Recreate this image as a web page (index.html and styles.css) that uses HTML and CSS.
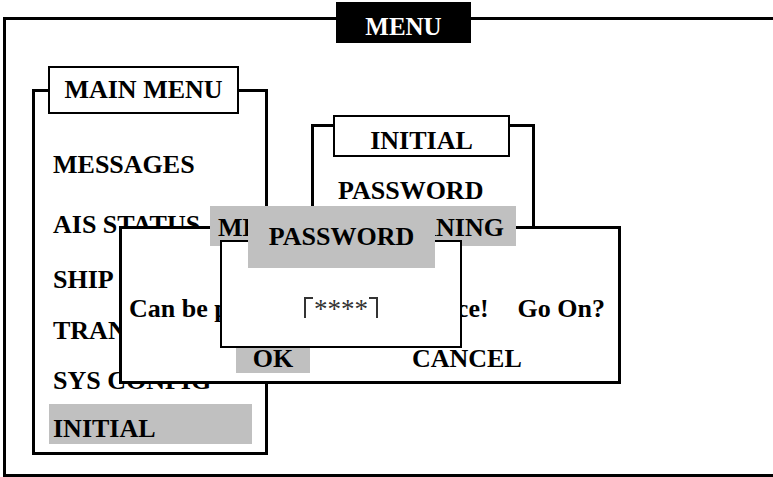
FILE: index.html
```html
<!DOCTYPE html>
<html lang="en">
<head>
  <meta charset="UTF-8">
  <title>Menu</title>
  <link rel="stylesheet" href="styles.css">
</head>
<body>
  <div class="screen">
    <div class="frame"></div>
    <div class="frame-title">MENU</div>

    <div class="window main-menu">
      <div class="window-title">MAIN MENU</div>
      <ul class="menu-items">
        <li>MESSAGES</li>
        <li>AIS STATUS</li>
        <li>SHIP INFO</li>
        <li>TRANSMIT</li>
        <li>SYS CONFIG</li>
        <li class="selected">INITIAL</li>
      </ul>
    </div>

    <div class="window initial">
      <div class="window-title">INITIAL</div>
      <ul class="menu-items">
        <li>PASSWORD</li>
        <li>DEFAULT</li>
      </ul>
    </div>

    <div class="dialog warning">
      <div class="dialog-title title-split"><span>MESSAGE</span><span>WARNING</span></div>
      <div class="message">
        <span>Can be performed</span>
        <span class="message-end"><span>once!</span><span>Go On?</span></span>
      </div>
      <div class="buttons">
        <span class="btn btn-ok">OK</span>
        <span class="btn btn-cancel">CANCEL</span>
      </div>
    </div>

    <div class="dialog password">
      <div class="dialog-title title-center">PASSWORD</div>
      <div class="secret">
        <span class="bracket bracket-left"></span>
        <span class="stars">****</span>
        <span class="bracket bracket-right"></span>
      </div>
    </div>
  </div>
</body>
</html>
```

FILE: styles.css
```css
body {
  margin: 0;
  background-color: #fff;
  color: #000;
  font-family: "Liberation Serif", "Times New Roman", serif;
  font-weight: bold;
}

.screen {
  position: relative;
  width: 773px;
  height: 477px;
  overflow: hidden;
}

.frame {
  box-sizing: border-box;
  width: 800px;
  height: 460px;
  margin: 17px 0 0 3px;
  border: 3px solid #000;
}

.frame-title {
  position: absolute;
  left: 336px;
  top: 2px;
  box-sizing: border-box;
  width: 135px;
  height: 41px;
  padding-top: 10px;
  background-color: #000;
  color: #fff;
  font-size: 25px;
  line-height: 30px;
  text-align: center;
}

/* windows */
.window {
  position: absolute;
  box-sizing: border-box;
  border: 3px solid #000;
  background-color: #fff;
}

.main-menu {
  left: 32px;
  top: 89px;
  width: 236px;
  height: 366px;
}

.initial {
  left: 311px;
  top: 124px;
  width: 224px;
  height: 200px;
}

.window-title {
  position: absolute;
  box-sizing: border-box;
  display: flex;
  align-items: center;
  justify-content: center;
  border: 2px solid #000;
  background-color: #fff;
  font-size: 26px;
  line-height: 30px;
}

.main-menu .window-title {
  left: 13px;
  top: -26px;
  width: 191px;
  height: 48px;
}

.initial .window-title {
  left: 19px;
  top: -12px;
  width: 177px;
  height: 42px;
  align-items: flex-start;
  padding-top: 9px;
}

.menu-items {
  list-style: none;
  margin: 0;
  padding: 0;
  display: grid;
}

.menu-items li {
  font-size: 26px;
  line-height: 30px;
  white-space: nowrap;
}

.main-menu .menu-items {
  margin: 0 13px 0 14px;
  padding-top: 58px;
  grid-template-rows: 60px 55px 51px 50px 38px 40px;
}

.main-menu .menu-items li {
  padding-left: 4px;
}

.main-menu .menu-items .selected {
  padding-top: 10px;
  background-color: #c0c0c0;
}

.initial .menu-items {
  padding: 49px 0 0 24px;
  grid-template-rows: 50px 50px;
}

/* dialogs */
.dialog {
  position: absolute;
  box-sizing: border-box;
  border: 3px solid #000;
  background-color: #fff;
}

.dialog-title {
  position: absolute;
  box-sizing: border-box;
  background-color: #c0c0c0;
  font-size: 26px;
  line-height: 30px;
}

.title-split {
  display: flex;
  justify-content: space-between;
  padding: 7px 12px 0 8px;
}

.title-center {
  display: flex;
  align-items: center;
  justify-content: center;
}

.warning {
  left: 119px;
  top: 226px;
  width: 502px;
  height: 158px;
  padding: 65px 13px 0 7px;
}

.warning .dialog-title {
  left: 88px;
  top: -23px;
  width: 306px;
  height: 40px;
}

.message {
  display: flex;
  justify-content: space-between;
  font-size: 26px;
  line-height: 30px;
  white-space: nowrap;
}

.message-end {
  display: flex;
  gap: 29px;
}

.buttons {
  display: flex;
  margin-top: 15px;
  font-size: 26px;
  line-height: 30px;
}

.btn {
  box-sizing: border-box;
  height: 34px;
  padding-top: 5px;
  text-align: center;
}

.btn-ok {
  width: 74px;
  margin-left: 107px;
  background-color: #c0c0c0;
}

.btn-cancel {
  margin-left: 102px;
}

.password {
  left: 220px;
  top: 240px;
  width: 242px;
  height: 108px;
  padding-top: 28px;
  border-width: 2px;
  display: flex;
  align-items: center;
  justify-content: center;
}

.password .dialog-title {
  left: 26px;
  top: -36px;
  width: 187px;
  height: 62px;
}

.secret {
  display: flex;
  align-items: flex-start;
  gap: 1px;
  margin-top: 2px;
}

.bracket {
  box-sizing: border-box;
  width: 9px;
  height: 21px;
  border-top: 2px solid #333;
}

.bracket-left {
  border-left: 2px solid #333;
}

.bracket-right {
  border-right: 2px solid #333;
}

.stars {
  font-size: 27px;
  font-weight: normal;
  line-height: 24px;
  color: #333;
}
```
